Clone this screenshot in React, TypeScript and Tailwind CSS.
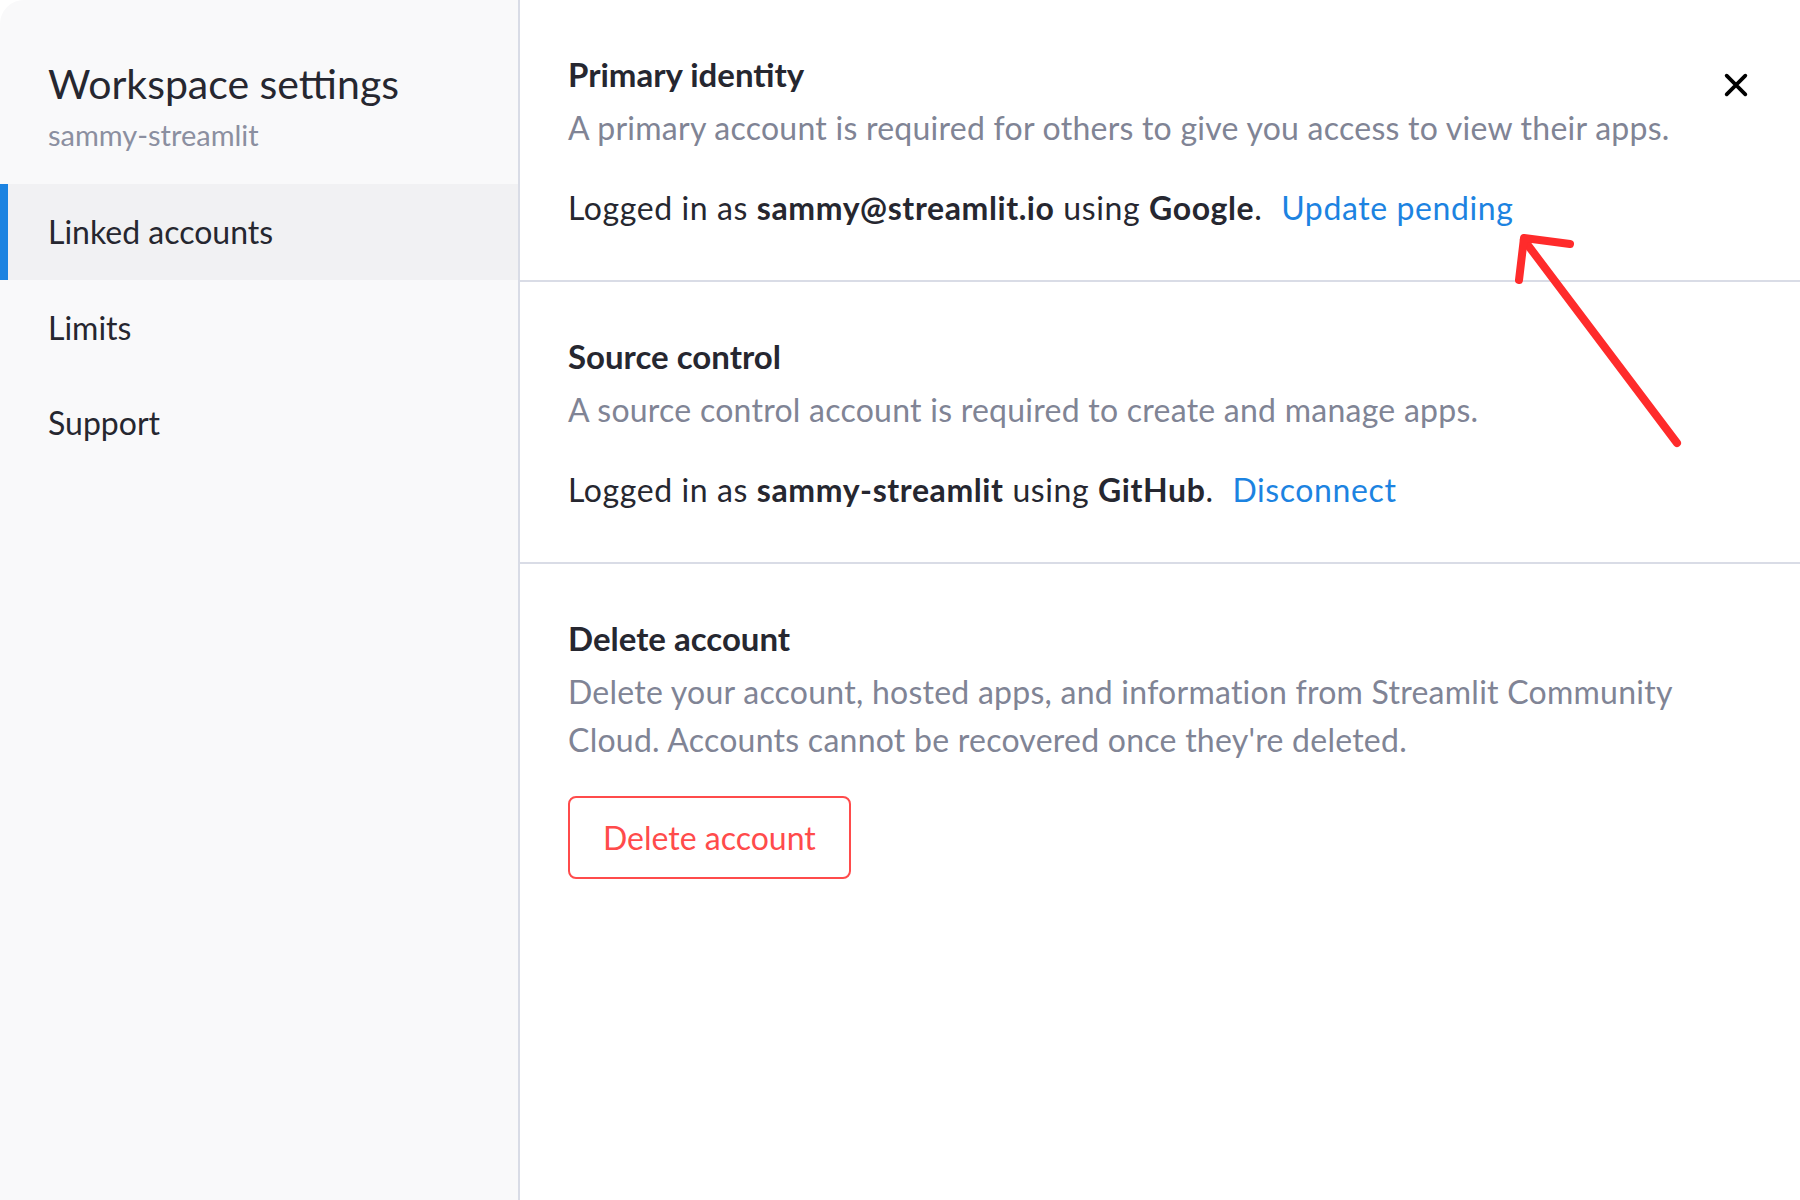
const font = { fontFamily: '"Lato", "Noto Sans", sans-serif' };

function Section({
  title,
  desc,
  children,
  last,
}: {
  title: string;
  desc: React.ReactNode;
  children: React.ReactNode;
  last?: boolean;
}) {
  return (
    <section className={`px-[48px] pt-[54px] pb-[48px] ${last ? "" : "border-b-2 border-[#d9dce6]"}`}>
      <h2 className="text-[33px] leading-[40px] font-bold text-[#262730]">{title}</h2>
      <p className="mt-[10px] text-[32px] leading-[48px] tracking-[0.25px] text-[#808495]">{desc}</p>
      {children}
    </section>
  );
}

export default function App() {
  return (
    <div className="relative flex w-[1800px] h-[1200px] bg-white overflow-hidden" style={font}>
      {/* sidebar */}
      <aside className="w-[520px] shrink-0 h-full bg-[#f9f9fa] border-r-2 border-[#d9dce6] rounded-tl-[24px]">
        <div className="px-[48px] pt-[60px]">
          <h1 className="text-[41px] leading-[48px] text-[#262730]">Workspace settings</h1>
          <p className="mt-[7px] text-[29px] leading-[40px] text-[#8b8fa0]">sammy-streamlit</p>
        </div>
        <nav className="mt-[29px] flex flex-col text-[32px] text-[#262730]">
          <div className="relative h-[96px] flex items-center px-[48px] bg-[#f1f1f3]">
            <span className="absolute left-0 top-0 bottom-0 w-[8px] bg-[#1c83e1]" />
            Linked accounts
          </div>
          <div className="h-[96px] flex items-center px-[48px]">Limits</div>
          <div className="h-[94px] flex items-center px-[48px]">Support</div>
        </nav>
      </aside>

      {/* main */}
      <main className="relative flex-1 h-full">
        <button className="absolute right-[49px] top-[70px] w-[30px] h-[30px] flex items-center justify-center">
          <svg width="28" height="28" viewBox="0 0 24 24" fill="none" stroke="#000" strokeWidth="3.2" strokeLinecap="round">
            <path d="M4 4l16 16M20 4L4 20" />
          </svg>
        </button>

        <Section title="Primary identity" desc="A primary account is required for others to give you access to view their apps.">
          <p className="mt-[32px] text-[32px] leading-[48px] tracking-[0.6px] text-[#262730]">
            Logged in as <b>sammy@streamlit.io</b> using <b>Google</b>.{" "}
            <a className="ml-[10px] text-[#1c83e1]">Update pending</a>
          </p>
        </Section>

        <Section title="Source control" desc="A source control account is required to create and manage apps.">
          <p className="mt-[32px] text-[32px] leading-[48px] tracking-[0.6px] text-[#262730]">
            Logged in as <b>sammy-streamlit</b> using <b>GitHub</b>.{" "}
            <a className="ml-[10px] text-[#1c83e1]">Disconnect</a>
          </p>
        </Section>

        <Section
          last
          title="Delete account"
          desc={
            <>
              Delete your account, hosted apps, and information from Streamlit Community
              <br />
              Cloud. Accounts cannot be recovered once they're deleted.
            </>
          }
        >
          <button className="mt-[32px] h-[83px] px-[33px] rounded-[8px] border-2 border-[#ff4b4b] text-[32px] text-[#ff4b4b]">
            Delete account
          </button>
        </Section>
      </main>

      {/* annotation arrow */}
      <svg className="absolute inset-0 pointer-events-none" width="1800" height="1200">
        <g stroke="#ff2b2b" strokeWidth="8" strokeLinecap="round" strokeLinejoin="round" fill="none">
          <path d="M1677 443L1524 240" />
          <path d="M1570 244L1524 238L1519 280" />
        </g>
      </svg>
    </div>
  );
}
